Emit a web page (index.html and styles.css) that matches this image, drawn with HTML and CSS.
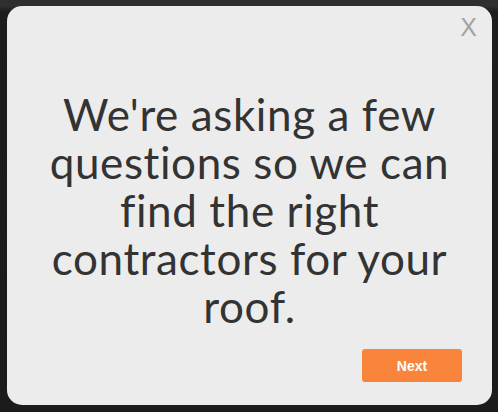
FILE: index.html
```html
<!DOCTYPE html>
<html lang="en">
<head>
    <meta charset="UTF-8">
    <title>Roof Questions</title>
    <link rel="stylesheet" href="styles.css">
</head>
<body>
    <div class="backdrop">
        <div class="modal">
            <div class="modal-top">
                <span class="close">X</span>
            </div>
            <p class="intro">We're asking a few questions so we can find the right contractors for your roof.</p>
            <div class="modal-foot">
                <button type="button" class="next-btn">Next</button>
            </div>
        </div>
    </div>
</body>
</html>
```

FILE: styles.css
```css
html, body { margin: 0; padding: 0; }
body { font-family: Lato, "Liberation Sans", sans-serif; background-color: #1f1f1f; }

.backdrop {
    width: 498px;
    height: 412px;
    box-sizing: border-box;
    padding: 6px 6px 7px 7px;
    background: linear-gradient(#2f2f2f 0, #2f2f2f 6px, #1d1d1d 12px, #1b1b1b 100%);
}

.modal {
    height: 100%;
    box-sizing: border-box;
    background-color: #ececec;
    border-radius: 15px;
    display: flex;
    flex-direction: column;
    padding: 8px 25px 23px 25px;
}

.modal-top {
    display: flex;
    justify-content: flex-end;
    margin-right: -10px;
}

.close {
    font-family: "Liberation Sans", Arial, sans-serif;
    font-size: 25px;
    color: #a3a3a3;
    line-height: 26px;
    cursor: pointer;
}

.intro {
    margin: 50px 0 0 0;
    text-align: center;
    font-size: 44px;
    line-height: 48px;
    letter-spacing: 0.6px;
    font-variant-ligatures: none;
    color: #333;
    flex: 1;
}

.modal-foot {
    display: flex;
    justify-content: flex-end;
    padding-right: 5px;
}

.next-btn {
    width: 100px;
    height: 33px;
    border: none;
    border-radius: 3px;
    background-color: #f9843b;
    color: #fff;
    font-family: "Liberation Sans", Arial, sans-serif;
    font-weight: bold;
    font-size: 14px;
}
```
